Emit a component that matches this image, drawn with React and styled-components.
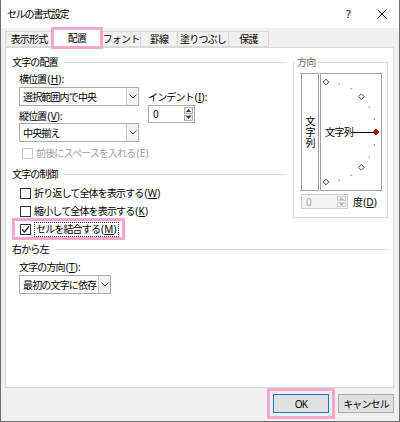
import React from 'react';
import styled, { createGlobalStyle } from 'styled-components';

const PINK = '#f5a8c9';

const Global = createGlobalStyle`
  html, body { margin: 0; padding: 0; background: #fff; }
  body { font-family: "Noto Sans", "Noto Sans CJK JP", sans-serif; }
  * { box-sizing: border-box; }
`;

const Window = styled.div`
  width: 400px;
  height: 422px;
  border: 1px solid #6e6e6e;
  border-top: none;
  background: #f0f0f0;
  display: flex;
  flex-direction: column;
  font-size: 10px;
  line-height: 14px;
  color: #000;
  letter-spacing: -0.85px;
`;

const TitleBar = styled.div`
  height: 28px;
  flex-shrink: 0;
  background: #fff;
  display: flex;
  align-items: center;
  padding-left: 6px;
`;

const Title = styled.div`
  font-size: 10px;
  letter-spacing: -1.2px;
`;

const TitleBtn = styled.div`
  width: ${p => p.$w}px;
  height: 28px;
  display: flex;
  align-items: center;
  justify-content: center;
  margin-left: ${p => (p.$first ? 'auto' : '0')};
  font-size: 11px;
`;

const Body = styled.div`
  flex: 1;
  display: flex;
  flex-direction: column;
  padding: 0 5px 0 4px;
`;

const TabRow = styled.div`
  height: 19px;
  display: flex;
  align-items: flex-end;
  flex-shrink: 0;
`;

const Tab = styled.div`
  position: relative;
  width: ${p => p.$w}px;
  height: ${p => (p.$active ? 20 : 16)}px;
  margin-bottom: ${p => (p.$active ? -1 : 0)}px;
  margin-left: ${p => (p.$first ? 0 : -1)}px;
  border: 1px solid #d9d9d9;
  border-bottom: ${p => (p.$active ? 'none' : '1px solid #d9d9d9')};
  background: ${p => (p.$active ? '#fff' : '#f0f0f0')};
  z-index: ${p => (p.$active ? 2 : 1)};
  display: flex;
  align-items: center;
  justify-content: center;
  white-space: nowrap;
  padding-bottom: ${p => (p.$active ? 2 : 0)}px;
  outline: ${p => (p.$active ? `3px solid ${PINK}` : 'none')};
  outline-offset: -2px;
`;

const Panel = styled.div`
  height: 341px;
  flex-shrink: 0;
  background: #fff;
  border: 1px solid #d9d9d9;
  padding: 7px 5px 0 6px;
  display: grid;
  grid-template-columns: 274px 95px;
  column-gap: 7px;
  align-content: start;
`;

const Column = styled.div`
  display: flex;
  flex-direction: column;
`;

const Section = styled.div`
  grid-column: 1 / 3;
  display: flex;
  flex-direction: column;
  margin-top: 4px;
`;

const Heading = styled.div`
  display: flex;
  align-items: center;
  height: 14px;
  white-space: nowrap;
  margin-top: ${p => p.$mt || 0}px;
  &::after {
    content: '';
    flex: 1;
    height: 1px;
    background: #dcdcdc;
    margin-left: 5px;
  }
`;

const Indent = styled.div`
  display: flex;
  flex-direction: ${p => (p.$row ? 'row' : 'column')};
  padding-left: ${p => p.$pl ?? 7}px;
  margin-top: ${p => p.$mt || 0}px;
`;

const Label = styled.div`
  height: 14px;
  margin-top: ${p => p.$mt || 0}px;
  white-space: nowrap;
`;

const Mn = styled.span`
  letter-spacing: 0.2px;
  margin-left: 1px;
`;

const U = styled.span`
  text-decoration: underline;
  text-underline-offset: 1px;
`;

const Key = ({ k, u = true, colon }) => (
  <Mn>
    ({u ? <U>{k}</U> : k}){colon ? ':' : ''}
  </Mn>
);

const SelectBox = styled.div`
  width: ${p => p.$w}px;
  height: 19px;
  margin-top: ${p => p.$mt || 0}px;
  border: 1px solid #acacac;
  background: #fff;
  display: flex;
  align-items: stretch;
`;

const SelectText = styled.div`
  flex: 1;
  display: flex;
  align-items: center;
  padding-left: 3px;
  white-space: nowrap;
  overflow: hidden;
`;

const DropBtn = styled.div`
  width: 12px;
  border-left: 1px solid #c9c9c9;
  background: #f3f3f3;
  display: flex;
  align-items: center;
  justify-content: center;
`;

const Spin = styled.div`
  width: 47px;
  height: ${p => p.$h}px;
  margin-top: ${p => p.$mt || 0}px;
  border: 1px solid ${p => (p.$disabled ? '#cfcfcf' : '#acacac')};
  background: ${p => (p.$disabled ? '#f4f4f4' : '#fff')};
  color: ${p => (p.$disabled ? '#a8a8a8' : '#000')};
  display: flex;
  align-items: stretch;
`;

const SpinText = styled.div`
  flex: 1;
  display: flex;
  align-items: center;
  padding-left: 4px;
`;

const SpinBtns = styled.div`
  width: 11px;
  display: flex;
  flex-direction: column;
  gap: 1px;
  padding: 1px;
`;

const SpinArrow = styled.div`
  flex: 1;
  border: 1px solid ${p => (p.$disabled ? '#cfcfcf' : '#adadad')};
  background: ${p => (p.$disabled ? '#f4f4f4' : '#ececec')};
  display: flex;
  align-items: center;
  justify-content: center;
`;

const IndentCol = styled.div`
  display: flex;
  flex-direction: column;
  margin-left: 9px;
  padding-top: 18px;
`;

const CheckRow = styled.div`
  position: relative;
  display: flex;
  align-items: center;
  width: fit-content;
  height: 18px;
  white-space: nowrap;
  margin-top: ${p => p.$mt || 0}px;
  color: ${p => (p.$disabled ? '#a0a0a0' : '#000')};
  &::after {
    content: '';
    display: ${p => (p.$highlight ? 'block' : 'none')};
    position: absolute;
    top: -2px;
    bottom: -2px;
    left: -8px;
    right: -6px;
    border: 3px solid ${PINK};
    pointer-events: none;
  }
`;

const Box = styled.span`
  width: 11px;
  height: 11px;
  border: 1px solid ${p => (p.$disabled ? '#c4c4c4' : '#333')};
  background: #fff;
  margin-right: 3px;
  display: flex;
  align-items: center;
  justify-content: center;
  flex-shrink: 0;
`;

const Focus = styled.span`
  border: 1px dotted #333;
  padding: 0 1px;
  line-height: 13px;
`;

const Fieldset = styled.fieldset`
  grid-column: 2;
  grid-row: 1;
  align-self: start;
  margin: 0;
  min-width: 0;
  padding: 4px 5px 8px 7px;
  border: 1px solid #dcdcdc;
`;

const Legend = styled.legend`
  padding: 0 2px;
  margin-left: -6px;
  line-height: 14px;
  color: #6d6d6d;
`;

const OrientRow = styled.div`
  display: flex;
  gap: 1px;
`;

const VertBox = styled.div`
  width: 18px;
  height: 118px;
  border: 1px solid #a0a0a0;
  display: flex;
  align-items: center;
  justify-content: center;
`;

const VertText = styled.div`
  writing-mode: vertical-rl;
  text-orientation: upright;
  letter-spacing: 1px;
  font-size: 10px;
  line-height: 10px;
`;

const Dial = styled.div`
  width: 62px;
  height: 118px;
  border: 1px solid #a0a0a0;
  display: flex;
`;

const DegRow = styled.div`
  display: flex;
  align-items: center;
  margin-top: 3px;
`;

const DegLabel = styled.span`
  margin-left: 5px;
  white-space: nowrap;
`;

const Footer = styled.div`
  flex: 1;
  display: flex;
  justify-content: flex-end;
  align-items: flex-start;
  gap: 9px;
  padding-top: 6px;
`;

const Button = styled.div`
  width: 56px;
  height: 19px;
  border: 1px solid ${p => (p.$default ? '#0078d7' : '#adadad')};
  background: #e1e1e1;
  display: flex;
  align-items: center;
  justify-content: center;
  white-space: nowrap;
  outline: ${p => (p.$highlight ? `3px solid ${PINK}` : 'none')};
  outline-offset: 3px;
`;

const Chevron = () => (
  <svg width="8" height="5" viewBox="0 0 8 5">
    <polyline points="0.5,0.5 4,4 7.5,0.5" fill="none" stroke="#555" strokeWidth="1" />
  </svg>
);

const Tri = ({ up, color }) => (
  <svg width="5" height="3" viewBox="0 0 5 3">
    <polygon points={up ? '0,3 2.5,0 5,3' : '0,0 2.5,3 5,0'} fill={color} />
  </svg>
);

const Select = ({ w, mt, children }) => (
  <SelectBox $w={w} $mt={mt}>
    <SelectText>{children}</SelectText>
    <DropBtn>
      <Chevron />
    </DropBtn>
  </SelectBox>
);

const SpinBox = ({ h, mt, disabled }) => {
  const c = disabled ? '#b8b8b8' : '#333';
  return (
    <Spin $h={h} $mt={mt} $disabled={disabled}>
      <SpinText>0</SpinText>
      <SpinBtns>
        <SpinArrow $disabled={disabled}><Tri up color={c} /></SpinArrow>
        <SpinArrow $disabled={disabled}><Tri color={c} /></SpinArrow>
      </SpinBtns>
    </Spin>
  );
};

const Check = ({ checked, disabled, highlight, mt, children }) => (
  <CheckRow $disabled={disabled} $highlight={highlight} $mt={mt}>
    <Box $disabled={disabled}>
      {checked && (
        <svg width="9" height="9" viewBox="0 0 9 9">
          <polyline points="1,4.5 3.5,7 8,1.5" fill="none" stroke="#222" strokeWidth="1.2" />
        </svg>
      )}
    </Box>
    {children}
  </CheckRow>
);

const DialDrawing = () => {
  const cx = 5, cy = 58, r = 50;
  const marks = [];
  for (let a = -90; a <= 90; a += 15) {
    const t = (a * Math.PI) / 180;
    const x = cx + r * Math.cos(t);
    const y = cy - r * Math.sin(t);
    if (a === 0) {
      marks.push(
        <polygon key={a} points={`${x},${y - 3} ${x + 3},${y} ${x},${y + 3} ${x - 3},${y}`} fill="#b01010" stroke="#7a0000" strokeWidth="0.8" />
      );
    } else if (a % 45 === 0) {
      marks.push(
        <polygon key={a} points={`${x},${y - 2.8} ${x + 2.8},${y} ${x},${y + 2.8} ${x - 2.8},${y}`} fill="#fff" stroke="#444" strokeWidth="1" />
      );
    } else {
      marks.push(<rect key={a} x={x - 0.6} y={y - 0.6} width="1.3" height="1.3" fill="#8a8a8a" />);
    }
  }
  return (
    <svg width="60" height="116" viewBox="0 0 60 116">
      {marks}
      <line x1="30" y1="58.5" x2="53" y2="58.5" stroke="#000" strokeWidth="1" />
      <text x="4" y="62" fontSize="10" fontFamily="'Noto Sans CJK JP', sans-serif" letterSpacing="-0.6">文字列</text>
    </svg>
  );
};

const tabs = [
  { label: '表示形式', w: 48 },
  { label: '配置', w: 50, active: true },
  { label: 'フォント', w: 40 },
  { label: '罫線', w: 38 },
  { label: '塗りつぶし', w: 52 },
  { label: '保護', w: 41 },
];

export default function App() {
  return (
    <>
      <Global />
      <Window>
        <TitleBar>
          <Title>セルの書式設定</Title>
          <TitleBtn $w={32} $first>?</TitleBtn>
          <TitleBtn $w={35}>
            <svg width="10" height="10" viewBox="0 0 10 10">
              <line x1="0.5" y1="0.5" x2="9.5" y2="9.5" stroke="#000" strokeWidth="1" />
              <line x1="9.5" y1="0.5" x2="0.5" y2="9.5" stroke="#000" strokeWidth="1" />
            </svg>
          </TitleBtn>
        </TitleBar>
        <Body>
          <TabRow>
            {tabs.map((t, i) => (
              <Tab key={t.label} $w={t.w} $active={t.active} $first={i === 0}>
                {t.label}
              </Tab>
            ))}
          </TabRow>
          <Panel>
            <Column>
              <Heading>文字の配置</Heading>
              <Indent $row $mt={3}>
                <Column>
                  <Label>横位置<Key k="H" colon /></Label>
                  <Select w={120} mt={1}>選択範囲内で中央</Select>
                  <Label $mt={3}>縦位置<Key k="V" colon /></Label>
                  <Select w={120}>中央揃え</Select>
                </Column>
                <IndentCol>
                  <Label>インデント<Key k="I" colon /></Label>
                  <SpinBox h={18} mt={1} />
                </IndentCol>
              </Indent>
              <Indent $pl={10} $mt={2}>
                <Check disabled>前後にスペースを入れる<Key k="E" u={false} /></Check>
              </Indent>
              <Heading $mt={5}>文字の制御</Heading>
              <Indent $pl={8} $mt={3}>
                <Check>折り返して全体を表示する<Key k="W" /></Check>
                <Check>縮小して全体を表示する<Key k="K" /></Check>
                <Check checked highlight>
                  <Focus>セルを結合する<Key k="M" /></Focus>
                </Check>
              </Indent>
            </Column>
            <Fieldset>
              <Legend>方向</Legend>
              <OrientRow>
                <VertBox>
                  <VertText>文字列</VertText>
                </VertBox>
                <Dial>
                  <DialDrawing />
                </Dial>
              </OrientRow>
              <DegRow>
                <SpinBox h={15} disabled />
                <DegLabel>度<Key k="D" /></DegLabel>
              </DegRow>
            </Fieldset>
            <Section>
              <Heading>右から左</Heading>
              <Indent $mt={4}>
                <Label>文字の方向<Key k="T" colon /></Label>
                <Select w={92} mt={1}>最初の文字に依存</Select>
              </Indent>
            </Section>
          </Panel>
          <Footer>
            <Button $default $highlight>OK</Button>
            <Button>キャンセル</Button>
          </Footer>
        </Body>
      </Window>
    </>
  );
}
